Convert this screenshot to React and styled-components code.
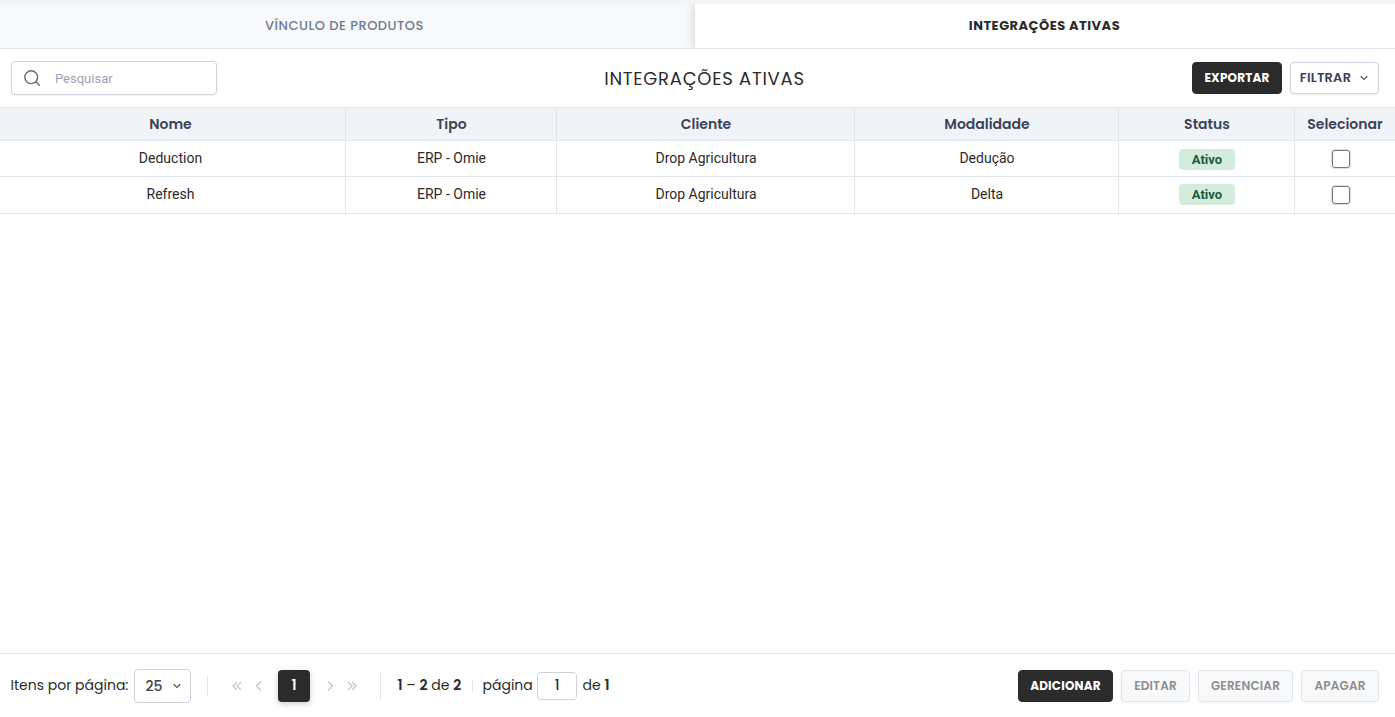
import React, { useState, useCallback } from 'react'
import styled, { createGlobalStyle, css } from 'styled-components'

const GlobalStyle = createGlobalStyle`
  * {
    box-sizing: border-box;
  }
  body {
    margin: 0;
    background: #fff;
    color: #2b2b2b;
    font-family: Roboto, sans-serif;
  }
`

const heading = css`
  font-family: Poppins, Inter, sans-serif;
`

const Page = styled.div`
  display: flex;
  flex-direction: column;
  height: 100vh;
  overflow: hidden;
  border-top: 4px solid #f3f4f6;
`

const Tabs = styled.div`
  display: flex;
  height: 45px;
  overflow: hidden;
  border-bottom: 1px solid #dfe5ee;
`

const Tab = styled.button`
  ${heading}
  flex: 0 0 ${props => props.$width}px;
  border: 0;
  padding: 0 ${props => props.$active ? 1 : 6}px 0 0;
  font-size: 13px;
  font-weight: ${props => props.$active ? 700 : 500};
  letter-spacing: .5px;
  color: ${props => props.$active ? '#2b2b2b' : '#6b7a90'};
  background: ${props => props.$active ? '#fff' : '#f8f9fb'};
  box-shadow: ${props => props.$active ? '0 0 10px rgba(0, 0, 0, .2)' : 'none'};
`

const Toolbar = styled.div`
  display: flex;
  align-items: center;
  height: 58px;
  padding: 0 16px 0 11px;
`

const Search = styled.label`
  display: flex;
  align-items: center;
  width: 206px;
  height: 34px;
  padding-left: 12px;
  border: 1px solid #d1d1db;
  border-radius: 4px;
  box-shadow: 0 1px 2px rgba(0, 0, 0, .05);

  input {
    width: 140px;
    margin-left: 14px;
    padding: 0;
    border: 0;
    outline: 0;
    font: 13px Roboto, sans-serif;
  }
  input::placeholder {
    color: #9ca3af;
  }
`

const Title = styled.h1`
  ${heading}
  flex: 1;
  margin: 0;
  padding-top: 1px;
  text-align: center;
  font-size: 18px;
  font-weight: 400;
  letter-spacing: .75px;
`

const Actions = styled.div`
  display: flex;
  gap: 8px;
`

const variants = {
  primary: css`
    color: #fff;
    background: #2b2b2b;
    border-color: #2b2b2b;
    font-weight: 700;
  `,
  outline: css`
    color: #3b4357;
    background: #fff;
    border-color: #d4d4dd;
    font-weight: 600;
    box-shadow: 0 1px 3px rgba(0, 0, 0, .08);
  `,
  disabled: css`
    color: #8d8d8d;
    background: #f8f9fb;
    border-color: #e0e6f0;
    font-weight: 600;
    box-shadow: 0 1px 3px rgba(0, 0, 0, .04);
  `
}

const Button = styled.button`
  ${heading}
  display: flex;
  align-items: center;
  justify-content: center;
  width: ${props => props.$width}px;
  height: 32px;
  padding: 0;
  border: 1px solid;
  border-radius: 4px;
  font-size: ${props => props.$size || 12}px;
  letter-spacing: .2px;
  white-space: nowrap;
  ${props => variants[props.$variant]}

  svg {
    margin: 0 0 0 8px;
  }
`

const Table = styled.table`
  width: 100%;
  table-layout: fixed;
  border-collapse: separate;
  border-spacing: 0;
  border-top: 1px solid #e2e6ee;

  th, td {
    padding: 0;
    text-align: center;
    border-right: 1px solid #e2e5eb;
    border-bottom: 1px solid #e2e5eb;
  }
  th:last-child, td:last-child {
    border-right: 0;
  }
  th:first-child, td:first-child {
    padding-right: 4px;
  }
`

const HeadCell = styled.th`
  ${heading}
  width: ${props => props.$width}px;
  height: 33px;
  font-size: 14px;
  font-weight: 600;
  color: #3b4357;
  background: #f0f3f8;

  &:not(:first-child):not(:last-child) {
    padding-left: 1px;
  }
`

const Row = styled.tr`
  height: ${props => props.$height}px;
  font-size: 14px;

  td {
    padding-bottom: ${props => props.$height - 35}px;
    line-height: 20px;
  }
  td:not(:first-child) {
    padding-left: 1px;
  }
`

const Badge = styled.span`
  display: block;
  width: 56px;
  height: 21px;
  margin: ${props => props.$top}px auto 0;
  border-radius: 4px;
  font-size: 13px;
  font-weight: 700;
  line-height: 21px;
  color: #1d5b40;
  background: #d3ecdb;
`

const Checkbox = styled.input`
  appearance: none;
  display: block;
  width: 18px;
  height: 18px;
  margin: 1px auto 0;
  border: 1px solid #777;
  border-radius: 3px;
  box-shadow: 0 0 0 1px rgba(0, 0, 0, .13);

  &:checked {
    background: #2b2b2b;
  }
`

const CheckCell = styled.td`
  && {
    padding-right: 9px;
  }
`

const Footer = styled.footer`
  ${heading}
  display: flex;
  align-items: center;
  justify-content: space-between;
  height: 64px;
  margin-top: auto;
  padding: 1px 16px 0 10px;
  border-top: 1px solid #e2e5eb;
  font-size: 14px;
`

const Pagination = styled.div`
  display: flex;
  align-items: center;
  white-space: nowrap;
`

const Label = styled.span`
  width: ${props => props.$width}px;
  padding: 0 0 1px .5px;

  b {
    font-weight: 600;
  }
`

const PageSize = styled.button`
  ${heading}
  display: flex;
  align-items: center;
  justify-content: space-between;
  width: 57px;
  height: 34px;
  margin-left: 5px;
  padding: 0 8px 0 10.5px;
  border: 1px solid #d1d1db;
  border-radius: 4px;
  background: #fff;
  color: #3b4357;
  font-size: 14px;
  font-weight: 500;
`

const Divider = styled.span`
  width: 1px;
  height: ${props => props.$height}px;
  margin: 0 ${props => props.$right}px 0 ${props => props.$left}px;
  background: #dfe5ee;
`

const Arrow = styled.button`
  display: flex;
  justify-content: center;
  width: 22px;
  padding: 0;
  border: 0;
  background: none;
  color: #c9c9c9;
`

const CurrentPage = styled.span`
  width: 32px;
  height: 32px;
  margin: 0 9px 0 8px;
  border-radius: 4px;
  text-align: center;
  font-weight: 600;
  line-height: 31px;
  color: #fff;
  background: #2b2b2b;
  box-shadow: 0 2px 6px rgba(0, 0, 0, .2);
`

const PageInput = styled.input`
  ${heading}
  width: 40px;
  height: 28px;
  margin: 0 5px;
  padding: 0;
  border: 1px solid #d1d1db;
  border-radius: 4px;
  text-align: center;
  font-size: 13.5px;
  font-weight: 500;
  color: #2b2b2b;
`

const SearchIcon = () => (
  <svg width="17" height="17" viewBox="0 0 17 17" fill="none" stroke="#6b6b6b" strokeWidth="1.4" strokeLinecap="round">
    <circle cx="7.2" cy="7.2" r="6.4"/>
    <path d="M11.8 11.8L15.3 15.3"/>
  </svg>
)

const ChevronDown = () => (
  <svg width="10" height="10" viewBox="0 0 10 10" fill="none" stroke="#555" strokeWidth="1.2">
    <path d="M1.7 3.3L5 6.5L8.3 3.3"/>
  </svg>
)

const Chevron = ({double, flip}) => (
  <svg width="10" height="12" viewBox="0 0 10 12" fill="none" stroke="currentColor" strokeWidth="1.4" transform={flip ? 'scale(-1 1)' : undefined}>
    {double
      ? <path d="M5 2L1 6L5 10M9 2L5 6L9 10"/>
      : <path d="M7 1.5L2.5 6L7 10.5"/>}
  </svg>
)

const columns = [
  { name: 'Nome', width: 346 },
  { name: 'Tipo', width: 211 },
  { name: 'Cliente', width: 298 },
  { name: 'Modalidade', width: 264 },
  { name: 'Status', width: 176 },
  { name: 'Selecionar', width: 100 }
]

const rows = [
  { nome: 'Deduction', tipo: 'ERP - Omie', cliente: 'Drop Agricultura', modalidade: 'Dedução', height: 36, badgeTop: 2 },
  { nome: 'Refresh', tipo: 'ERP - Omie', cliente: 'Drop Agricultura', modalidade: 'Delta', height: 37, badgeTop: 0 }
]

const App = () => {
  const [selected, setSelected] = useState([])
  const toggle = useCallback(nome => {
    setSelected(list => list.includes(nome) ? list.filter(n => n !== nome) : [...list, nome])
  }, [setSelected])

  return (
    <Page>
      <GlobalStyle/>
      <Tabs>
        <Tab $width={695}>VÍNCULO DE PRODUTOS</Tab>
        <Tab $width={700} $active>INTEGRAÇÕES ATIVAS</Tab>
      </Tabs>

      <Toolbar>
        <Search>
          <SearchIcon/>
          <input placeholder="Pesquisar"/>
        </Search>
        <Title>INTEGRAÇÕES ATIVAS</Title>
        <Actions>
          <Button $variant="primary" $width={90}>EXPORTAR</Button>
          <Button $variant="outline" $width={89} $size={13}>FILTRAR <ChevronDown/></Button>
        </Actions>
      </Toolbar>

      <Table>
        <thead>
          <tr>
            {columns.map(({name, width}) => <HeadCell key={name} $width={width}>{name}</HeadCell>)}
          </tr>
        </thead>
        <tbody>
          {rows.map(row => (
            <Row key={row.nome} $height={row.height}>
              <td>{row.nome}</td>
              <td>{row.tipo}</td>
              <td>{row.cliente}</td>
              <td>{row.modalidade}</td>
              <td><Badge $top={row.badgeTop}>Ativo</Badge></td>
              <CheckCell>
                <Checkbox type="checkbox" checked={selected.includes(row.nome)} onChange={() => toggle(row.nome)}/>
              </CheckCell>
            </Row>
          ))}
        </tbody>
      </Table>

      <Footer>
        <Pagination>
          <Label $width={119}>Itens por página:</Label>
          <PageSize>25 <ChevronDown/></PageSize>
          <Divider $height={20} $left={16} $right={18}/>
          <Arrow><Chevron double/></Arrow>
          <Arrow><Chevron/></Arrow>
          <CurrentPage>1</CurrentPage>
          <Arrow><Chevron flip/></Arrow>
          <Arrow><Chevron double flip/></Arrow>
          <Divider $height={28} $left={17} $right={16}/>
          <Label $width={66}><b>1</b> – <b>2</b> de <b>2</b></Label>
          <Divider $height={12} $left={9} $right={9}/>
          <Label $width={50}>página</Label>
          <PageInput defaultValue="1"/>
          <Label $width={27}>de <b>1</b></Label>
        </Pagination>
        <Actions>
          <Button $variant="primary" $width={95}>ADICIONAR</Button>
          <Button $variant="disabled" $width={69}>EDITAR</Button>
          <Button $variant="disabled" $width={95}>GERENCIAR</Button>
          <Button $variant="disabled" $width={78}>APAGAR</Button>
        </Actions>
      </Footer>
    </Page>
  )
}

export default App
